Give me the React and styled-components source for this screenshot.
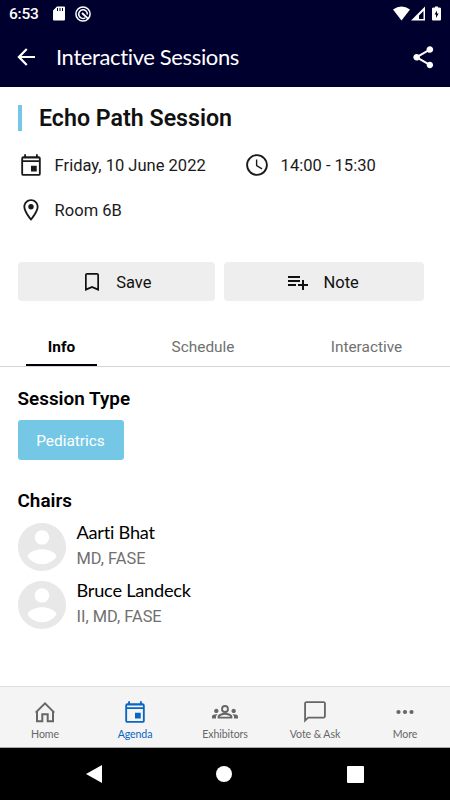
import React from "react";
import styled, { createGlobalStyle } from "styled-components";

const Global = createGlobalStyle`
  * { box-sizing: border-box; }
  body { margin: 0; background: #fff; }
`;

const Screen = styled.div`
  width: 450px;
  height: 800px;
  display: flex;
  flex-direction: column;
  overflow: hidden;
  background: #fff;
  color: #000;
  font-family: Roboto, "Liberation Sans", sans-serif;
`;

const Header = styled.header`
  height: 87px;
  flex: none;
  background: #00002f;
  color: #fff;
`;

const StatusBar = styled.div`
  height: 27px;
  display: flex;
  align-items: center;
  padding: 0 8px 0 9px;
`;

const Time = styled.span`
  width: 43px;
  padding-top: 1px;
  font-size: 15.5px;
  font-weight: 500;
  line-height: 27px;
  letter-spacing: -0.2px;
`;

const StatusIcons = styled.div`
  display: flex;
  align-items: center;
  gap: ${(p) => p.$gap || "0"};
  margin-left: ${(p) => (p.$end ? "auto" : "0")};
`;

const TitleBar = styled.div`
  height: 60px;
  display: flex;
  align-items: center;
  padding: 0 14px 0 13px;
`;

const PageTitle = styled.h1`
  flex: 1;
  margin: 0 0 0 17px;
  font: 400 22px/30px Lato, sans-serif;
  letter-spacing: -0.37px;
`;

const Icon = styled.svg`
  display: block;
  flex: none;
  width: ${(p) => p.$w || p.$size || 24}px;
  height: ${(p) => p.$h || p.$size || 24}px;
  fill: ${(p) => (p.$stroke ? "none" : "currentColor")};
  stroke: ${(p) => (p.$stroke ? "currentColor" : "none")};
`;

const Summary = styled.section`
  padding: 18px 17px 0 18px;
`;

const SessionTitle = styled.h2`
  margin: 0;
  height: 26px;
  border-left: 4px solid #74c8e6;
  padding-left: 17px;
  color: #111;
  font-size: 23.2px;
  line-height: 27px;
  font-weight: 600;
`;

const Facts = styled.div`
  display: grid;
  grid-template-columns: 226px auto;
  row-gap: 19px;
  margin-top: 21px;
`;

const Fact = styled.div`
  height: 26px;
  display: flex;
  align-items: center;
  gap: 11px;
  margin-left: -0.4px;
  font-size: 16.55px;
  color: #1a1a1a;
`;

const Actions = styled.div`
  display: flex;
  gap: 9px;
  padding: 39px 26px 0 17.5px;
`;

const ActionButton = styled.button`
  flex: 1;
  height: 39px;
  display: flex;
  align-items: center;
  justify-content: center;
  gap: ${(p) => p.$gap || 12}px;
  padding: 1px ${(p) => p.$shift || 0}px 0 0;
  border: 0;
  border-radius: 4px;
  background: #eee;
  color: #111;
  font: 400 16.5px Roboto, sans-serif;
`;

const Tabs = styled.nav`
  height: 41px;
  margin-top: 25px;
  display: flex;
  justify-content: space-between;
  padding: 0 26px;
  border-bottom: 1px solid #d5d5d5;
`;

const Tab = styled.div`
  width: ${(p) => p.$width}px;
  height: 40px;
  padding-top: 1px;
  text-align: center;
  font-size: 15.4px;
  line-height: 40px;
  font-weight: ${(p) => (p.$active ? 700 : 400)};
  color: ${(p) => (p.$active ? "#000" : "#707070")};
  border-bottom: 2px solid ${(p) => (p.$active ? "#00000a" : "transparent")};
`;

const Details = styled.main`
  flex: 1;
  padding: 20px 18px 0 17.5px;
`;

const SectionTitle = styled.h3`
  margin: 0;
  font-size: 18.9px;
  line-height: 24px;
  font-weight: 600;
`;

const Tag = styled.div`
  width: 106px;
  height: 40px;
  margin: 9px 0 29px;
  border-radius: 3px;
  background: #74c8e6;
  color: #fff;
  font-size: 15.4px;
  line-height: 42px;
  text-align: center;
`;

const People = styled.div`
  display: grid;
  gap: 10px;
  margin-top: 10px;
`;

const Person = styled.div`
  height: 48px;
  display: flex;
  gap: 11px;
  color: #e8e8e8;
`;

const PersonText = styled.div`
  display: flex;
  flex-direction: column;
  margin-top: -3px;
`;

const Name = styled.div`
  color: #000;
  font: 400 18.2px/24px Lato, sans-serif;
  letter-spacing: -0.24px;
`;

const Credentials = styled.div`
  color: #707070;
  font-size: 16.4px;
  line-height: 30px;
`;

const BottomNav = styled.nav`
  height: 62px;
  flex: none;
  display: grid;
  grid-template-columns: repeat(5, 1fr);
  background: #f4f4f4;
  border-top: 1px solid #dedede;
  border-bottom: 1px solid #aaa;
`;

const NavItem = styled.div`
  display: flex;
  flex-direction: column;
  align-items: center;
  color: ${(p) => (p.$active ? "#0866c2" : "#666")};
`;

const NavIcon = styled.div`
  height: 26px;
  margin-top: 11.5px;
  display: flex;
  align-items: center;
`;

const NavLabel = styled.span`
  margin-top: 2.5px;
  font: 400 10.6px/14px Lato, sans-serif;
  white-space: nowrap;
  letter-spacing: -0.1px;
`;

const SystemNav = styled.div`
  height: 52px;
  flex: none;
  display: flex;
  align-items: center;
  justify-content: space-between;
  padding: 0 86.5px 0 86px;
  background: #000;
  color: #fff;
`;

const paths = {
  back: "M20.3 11H7.83l5.59-5.59L12 4l-8 8 8 8 1.41-1.41L7.83 13H20.3v-2z",
  share: "M18 16.08c-.76 0-1.44.3-1.96.77L8.91 12.7c.05-.23.09-.46.09-.7s-.04-.47-.09-.7l7.05-4.11c.54.5 1.25.81 2.04.81 1.66 0 3-1.34 3-3s-1.34-3-3-3-3 1.34-3 3c0 .24.04.47.09.7L8.04 9.81C7.5 9.31 6.79 9 6 9c-1.66 0-3 1.34-3 3s1.34 3 3 3c.79 0 1.5-.31 2.04-.81l7.12 4.16c-.05.21-.08.43-.08.65 0 1.61 1.31 2.92 2.92 2.92s2.92-1.31 2.92-2.92-1.31-2.92-2.92-2.92z",
  event: "M19 4h-.7V2h-1.7v2H7.4V2H5.7v2H5a2 2 0 0 0-2 2v14a2 2 0 0 0 2 2h14a2 2 0 0 0 2-2V6a2 2 0 0 0-2-2zm.3 16.3H4.7V9.3h14.6v11zm0-12.7H4.7V6h14.6v1.6zM12 12.8h5.3V18H12z",
  clock: "M11.99 2C6.47 2 2 6.48 2 12s4.47 10 9.99 10C17.52 22 22 17.52 22 12S17.52 2 11.99 2zM12 20.3a8.3 8.3 0 1 1 0-16.6 8.3 8.3 0 0 1 0 16.6zM12.3 7H11v6l5.25 3.15.75-1.13-4.7-2.77V7z",
  place: "M12 2C8.13 2 5 5.13 5 9c0 5.25 7 13 7 13s7-7.75 7-13c0-3.87-3.13-7-7-7zM6.7 9c0-2.92 2.38-5.3 5.3-5.3s5.3 2.38 5.3 5.3c0 2.88-2.98 7.49-5.3 10.38C9.72 16.51 6.7 11.85 6.7 9zm7.8 0a2.5 2.5 0 1 1-5 0 2.5 2.5 0 0 1 5 0z",
  bookmark: "M17 3H7c-1.1 0-2 .9-2 2v16l7-3 7 3V5c0-1.1-.9-2-2-2zm.3 15.2L12 15.9l-5.3 2.3V4.7h10.6v13.5z",
  note: "M14 10H2v2h12v-2zm0-4H2v2h12V6zm4 8v-4h-2v4h-4v2h4v4h2v-4h4v-2h-4zM2 16h8v-2H2v2z",
  account: "M12 2C6.48 2 2 6.48 2 12s4.48 10 10 10 10-4.48 10-10S17.52 2 12 2zm0 3c1.66 0 3 1.34 3 3s-1.34 3-3 3-3-1.34-3-3 1.34-3 3-3zm0 14.2c-2.5 0-4.71-1.28-6-3.22.03-1.99 4-3.08 6-3.08 1.99 0 5.97 1.09 6 3.08-1.29 1.94-3.5 3.22-6 3.22z",
  groups: "M4 13c1.1 0 2-.9 2-2s-.9-2-2-2-2 .9-2 2 .9 2 2 2zm1.13 1.1c-.37-.06-.74-.1-1.13-.1-.99 0-1.93.21-2.78.58C.48 14.9 0 15.62 0 16.43V18h3.7v-1.61c0-.83.83-1.61 1.43-2.29zM20 13c1.1 0 2-.9 2-2s-.9-2-2-2-2 .9-2 2 .9 2 2 2zm4 3.43c0-.81-.48-1.53-1.22-1.85-.85-.37-1.79-.58-2.78-.58-.39 0-.76.04-1.13.1.6.68 1.43 1.46 1.43 2.29V18H24v-1.57zm-7.76-2.78c-1.17-.52-2.61-.9-4.24-.9s-3.07.39-4.24.9C6.28 14.13 5.2 15.21 5.2 16.39V18h13.6v-1.61c0-1.18-1.08-2.26-2.56-2.74zM7.3 16.3c.2-.5.5-.8 1.5-1.1.97-.38 2.1-.56 3.2-.56s2.23.18 3.2.56c1 .3 1.3.6 1.5 1.1H7.3zM12 7.3a1.9 1.9 0 1 1 0 3.8 1.9 1.9 0 0 1 0-3.8m0-1.7a3.6 3.6 0 1 0 0 7.2 3.6 3.6 0 0 0 0-7.2z",
  chat: "M20 2H4c-1.1 0-2 .9-2 2v18l4-4h14c1.1 0 2-.9 2-2V4c0-1.1-.9-2-2-2zm.3 14.3H5.4L3.7 18V3.7h16.6v12.6z",
  more: "M5.5 9.9a2.1 2.1 0 1 0 0 4.2 2.1 2.1 0 0 0 0-4.2zm13 0a2.1 2.1 0 1 0 0 4.2 2.1 2.1 0 0 0 0-4.2zm-6.5 0a2.1 2.1 0 1 0 0 4.2 2.1 2.1 0 0 0 0-4.2z",
};

const Glyph = ({ name, size = 24, box = "0 0 24 24" }) => (
  <Icon $size={size} viewBox={box}>
    <path d={paths[name]} fillRule={name === "account" ? "evenodd" : "nonzero"} />
  </Icon>
);

const HomeIcon = () => (
  <Icon $size={26} viewBox="-1 -1 26 26" $stroke strokeWidth="2">
    <path d="M2.7 12.6 12 3.4l9.3 9.2M4 11.2v10h5.3v-7h5.4v7H20v-10" />
  </Icon>
);

const people = [
  { name: "Aarti Bhat", credentials: "MD, FASE" },
  { name: "Bruce Landeck", credentials: "II, MD, FASE" },
];

const navItems = [
  { label: "Home", icon: <HomeIcon /> },
  { label: "Agenda", icon: <Glyph name="event" size={26} />, active: true },
  { label: "Exhibitors", icon: <Glyph name="groups" size={26} /> },
  { label: "Vote & Ask", icon: <Glyph name="chat" size={26} /> },
  { label: "More", icon: <Glyph name="more" /> },
];

export default function App() {
  return (
    <Screen>
      <Global />
      <Header>
        <StatusBar>
          <Time>6:53</Time>
          <StatusIcons $gap="9px">
            <Icon $w={14} $h={15} viewBox="0 0 14 15">
              <path fillRule="evenodd" d="M5 .5h7q1 0 1 1v12q0 1-1 1H2q-1 0-1-1v-9zM5 2v3h1V2zM7.5 2v3h1V2zM10 2v3h1V2z" />
            </Icon>
            <Icon $size={16} viewBox="0 0 16 16" $stroke strokeWidth="1.5">
              <circle cx="8" cy="8" r="7.1" />
              <path d="M10.2 11.8A4.3 4.3 0 1 1 12.3 8.5" />
              <path d="m7 7 6 5.6" strokeWidth="1.9" />
            </Icon>
          </StatusIcons>
          <StatusIcons $end>
            <Icon $w={17} $h={15} viewBox="0 0 17 15">
              <path d="M0 3.4Q8.5-2.6 17 3.4L8.5 14.5z" />
            </Icon>
            <Icon $w={21} $h={15} viewBox="0 0 21 15">
              <path fillRule="evenodd" d="M1 14.5 15 .5v14zM9 13h4.5V5L9 9.5z" />
            </Icon>
            <Icon $w={11} $h={15} viewBox="0 0 11 15">
              <path fillRule="evenodd" d="M3 1.5h1V.5h3v1h1q2 0 2 1v11q0 1-1 1H2q-1 0-1-1v-11q0-1 2-1zm3 3L3.5 8.5H5V12l2.7-4.5H6z" />
            </Icon>
          </StatusIcons>
        </StatusBar>
        <TitleBar>
          <Glyph name="back" size={26} />
          <PageTitle>Interactive Sessions</PageTitle>
          <Glyph name="share" size={26.5} />
        </TitleBar>
      </Header>
      <Summary>
        <SessionTitle>Echo Path Session</SessionTitle>
        <Facts>
          <Fact><Glyph name="event" size={26} />Friday, 10 June 2022</Fact>
          <Fact><Glyph name="clock" size={26} />14:00 - 15:30</Fact>
          <Fact><Glyph name="place" size={26} />Room 6B</Fact>
        </Facts>
      </Summary>
      <Actions>
        <ActionButton $shift={1}><Glyph name="bookmark" />Save</ActionButton>
        <ActionButton $shift={3} $gap={13}><Glyph name="note" />Note</ActionButton>
      </Actions>
      <Tabs>
        <Tab $width={71} $active>Info</Tab>
        <Tab $width={107}>Schedule</Tab>
        <Tab $width={115}>Interactive</Tab>
      </Tabs>
      <Details>
        <SectionTitle>Session Type</SectionTitle>
        <Tag>Pediatrics</Tag>
        <SectionTitle>Chairs</SectionTitle>
        <People>
          {people.map((p) => (
            <Person key={p.name}>
              <Glyph name="account" size={48} box="2 2 20 20" />
              <PersonText>
                <Name>{p.name}</Name>
                <Credentials>{p.credentials}</Credentials>
              </PersonText>
            </Person>
          ))}
        </People>
      </Details>
      <BottomNav>
        {navItems.map((n) => (
          <NavItem key={n.label} $active={n.active}>
            <NavIcon>{n.icon}</NavIcon>
            <NavLabel>{n.label}</NavLabel>
          </NavItem>
        ))}
      </BottomNav>
      <SystemNav>
        <Icon $w={16} $h={18} viewBox="0 0 16 18"><path d="M0 9 16 0v18z" /></Icon>
        <Icon $size={16} viewBox="0 0 16 16"><circle cx="8" cy="8" r="8" /></Icon>
        <Icon $size={17} viewBox="0 0 17 17"><rect width="17" height="17" rx="1" /></Icon>
      </SystemNav>
    </Screen>
  );
}
